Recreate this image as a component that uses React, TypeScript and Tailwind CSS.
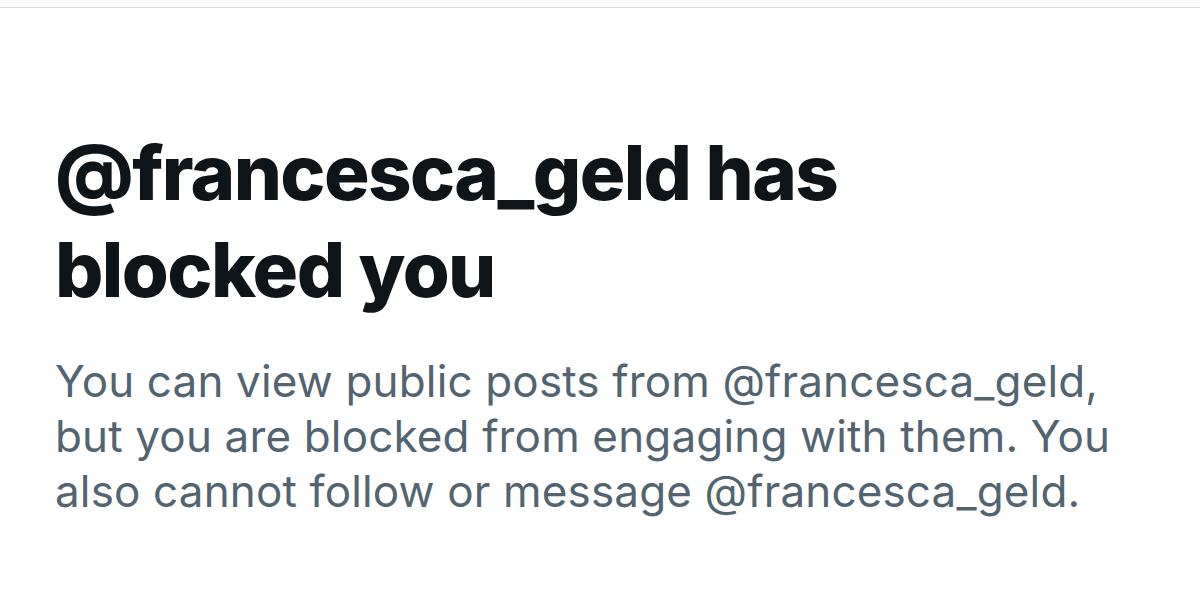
import React from "react";

export default function App() {
  return (
    <div className="w-[1200px] h-[609px] bg-white overflow-hidden">
      <div className="h-[7px] bg-[#fafafa]" />
      <div className="h-px bg-[#d6d6d6]" />
      <div className="pl-[55px] pt-[116px] font-['Inter',sans-serif]">
        <h1 className="text-[76px] leading-[97px] font-extrabold text-[#0f1419] tracking-[-1.6px]">
          <span className="block whitespace-nowrap">@francesca_geld has</span>
          <span className="block whitespace-nowrap">blocked you</span>
        </h1>
        <p className="mt-[36px] text-[44px] leading-[55px] text-[#536471] tracking-[0.15px]">
          <span className="block whitespace-nowrap">You can view public posts from @francesca_geld,</span>
          <span className="block whitespace-nowrap">but you are blocked from engaging with them. You</span>
          <span className="block whitespace-nowrap">also cannot follow or message @francesca_geld.</span>
        </p>
      </div>
    </div>
  );
}
